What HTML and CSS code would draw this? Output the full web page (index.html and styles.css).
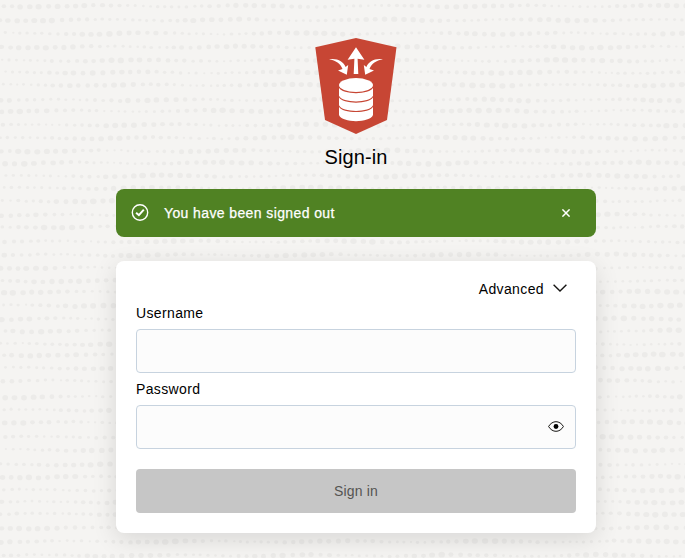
FILE: index.html
```html
<!DOCTYPE html>
<html lang="en">
<head>
<meta charset="utf-8">
<title>Sign-in</title>
<link rel="stylesheet" href="styles.css">
</head>
<body>
<svg class="pattern" width="685" height="558" aria-hidden="true"></svg>
<main class="page">
  <header class="brand">
    <svg class="logo" width="82" height="96" viewBox="0 0 82 96" aria-hidden="true">
      <path fill="#c74634" d="M41 0 81.5 9.3 72 82 41 96 10 82 .3 9.3Z"/>
      <g fill="#fff">
        <path d="M41 9.2 49.4 21.7 42.6 20.8 43.3 36H38.7L39.4 20.8 32.6 21.7Z"/>
        <path id="arrow" d="M14 21.2C22.5 20 28.5 23.5 30.6 29L33.2 27 31.8 36.8 23 32.4 27.5 31C25.3 25.5 21 22.4 14 21.2Z"/>
        <use href="#arrow" transform="matrix(-1 0 0 1 82 0)"/>
        <ellipse cx="41" cy="47.1" rx="17" ry="7"/>
        <path d="M24 49.8C27 56.9 55 56.9 58 49.8V57.8C55 65.3 27 65.3 24 57.8Z"/>
        <path d="M24 59.3C27 66.4 55 66.4 58 59.3V67.3C55 74.8 27 74.8 24 67.3Z"/>
        <path d="M24 68.7C27 75.8 55 75.8 58 68.7V77C55 85.2 27 85.2 24 77Z"/>
      </g>
    </svg>
    <h1 class="title">Sign-in</h1>
  </header>
  <div class="alert" role="status">
    <svg class="alert-icon" width="18" height="18" viewBox="0 0 18 18" fill="none" stroke="#fff">
      <circle cx="9" cy="8.5" r="7.7" stroke-width="1.4"/>
      <path d="M5.1 8.7 7.9 11.2 12.8 5.7" stroke-width="2"/>
    </svg>
    <span class="alert-text">You have been signed out</span>
    <svg width="8" height="8" viewBox="0 0 8 8" stroke="#fff" stroke-width="1.5"><path d="M.4.4 7.6 7.6M7.6.4.4 7.6"/></svg>
  </div>
  <form class="card">
    <div class="advanced">
      <span>Advanced</span>
      <svg class="chevron" width="14" height="8" viewBox="0 0 14 8" fill="none" stroke="#161513" stroke-width="1.4"><path d="M.6.7 7 7 13.4.7"/></svg>
    </div>
    <label class="label" for="user">Username</label>
    <div class="field"><input id="user" class="input" type="text"></div>
    <label class="label" for="pass">Password</label>
    <div class="field">
      <input id="pass" class="input" type="password">
      <svg class="eye" width="16" height="11" viewBox="0 0 16 11"><path d="M.6 5.5C4.2-.9 11.8-.9 15.4 5.5 11.8 11.9 4.2 11.9.6 5.5Z" fill="none" stroke="#161513"/><circle cx="8" cy="5.5" r="2.4"/></svg>
    </div>
    <button class="submit" type="button" disabled>Sign in</button>
  </form>
</main>
<script src="pattern.js"></script>
</body>
</html>
```
FILE: styles.css
```css
* { box-sizing: border-box; }
body {
  margin: 0;
  height: 558px;
  overflow: hidden;
  background: #f5f4f2;
  color: #000;
  font: 14px/20px "Liberation Sans", Arial, sans-serif;
}
.pattern { position: absolute; left: 0; top: 0; fill: #ecebe9; }
.page {
  position: relative;
  width: 480px;
  margin-left: 116px;
  padding-top: 38px;
}
.brand { display: flex; flex-direction: column; align-items: center; }
.logo { display: block; }
.title { margin: 9px 0 18px; font-size: 20px; line-height: 28px; font-weight: 400; letter-spacing: 0.1px; }
.alert {
  display: flex;
  align-items: center;
  height: 48px;
  padding: 0 26px 0 15px;
  border-radius: 8px;
  background: #508223;
  color: #fff;
}
.alert-icon { margin-right: 15px; }
.alert-text { flex: 1; letter-spacing: 0.39px; -webkit-text-stroke: 0.25px #fff; }
.card {
  height: 272px;
  margin-top: 24px;
  padding: 18px 20px 20px;
  border-radius: 8px;
  background: #fff;
  box-shadow: 0 6px 24px rgba(0, 0, 0, 0.12);
}
.advanced {
  display: flex;
  justify-content: flex-end;
  align-items: center;
  gap: 9px;
  height: 20px;
  padding-right: 9px;
  letter-spacing: 0.38px;
}
.chevron { margin-bottom: 2px; }
.label { display: block; margin-top: 4px; line-height: 20px; letter-spacing: 0.36px; }
.field {
  display: flex;
  align-items: center;
  height: 44px;
  margin: 6px 0;
  padding-right: 11px;
  border: 1px solid #c7d3df;
  border-radius: 4px;
  background: #fcfcfc;
}
.eye { margin-bottom: 2px; }
.input { flex: 1; min-width: 0; height: 40px; border: 0; outline: 0; background: transparent; font: inherit; }
.submit {
  display: block;
  width: 100%;
  height: 44px;
  margin-top: 20px;
  border: 0;
  border-radius: 4px;
  background: #c6c6c6;
  color: #555452;
  font: inherit;
  letter-spacing: 0.2px;
}
```
FILE: pattern.js
```js
// Rows of uneven dots whose size swells and shrinks along each row.
const rows = [6, 20, 33.5, 47, 60.5, 72.5, 85, 100, 111, 125, 138, 151, 163, 176, 188,
  201, 215, 227, 241.5, 255, 268, 281, 292, 305.5, 319, 331, 344, 355, 368, 381,
  397, 410, 422.5, 437, 450, 464.5, 477, 490, 502, 514, 528, 541.5, 555.5];
let seed = 71;
const rand = () => (seed = (seed * 16807) % 2147483647) / 2147483647;
let dots = "";
rows.forEach((y) => {
  const phase = rand() * 6.3;
  const rate = 0.025 + rand() * 0.015;
  let x = rand() * 6;
  while (x < 688) {
    const r = 1.95 + 0.65 * Math.sin(x * rate + phase) + (rand() - 0.5) * 0.6;
    const cy = y + Math.sin(x * 0.045 + phase) * 0.7 + (rand() - 0.5) * 0.6;
    dots += `<ellipse cx="${x.toFixed(1)}" cy="${cy.toFixed(1)}" rx="${(r * (1 + rand() * 0.2)).toFixed(2)}" ry="${r.toFixed(2)}"/>`;
    x += 4.2 + r * 1.7 + rand() * 1.5;
  }
});
document.querySelector(".pattern").innerHTML = dots;
```
